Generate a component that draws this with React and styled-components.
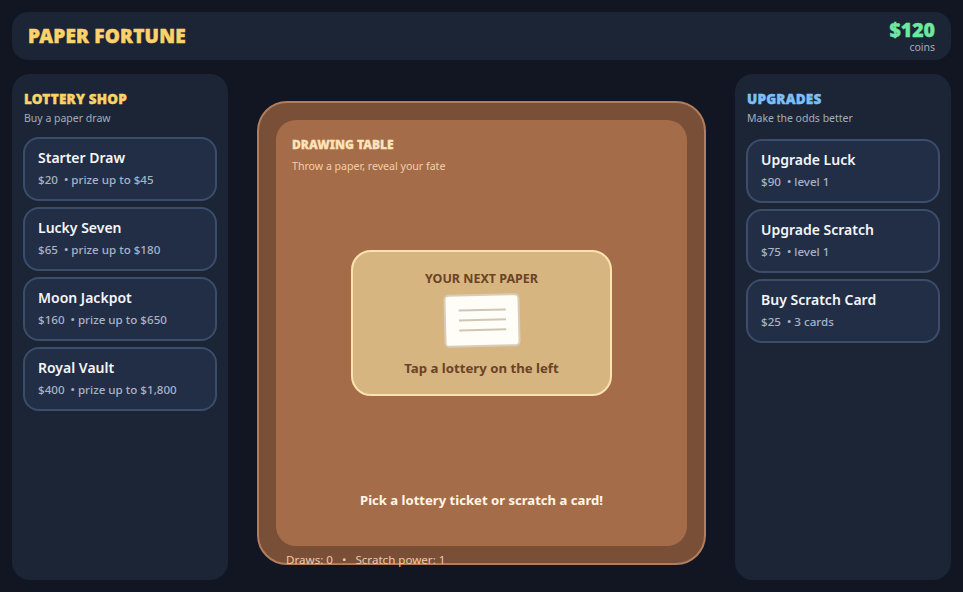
import React from "react";
import styled, { createGlobalStyle } from "styled-components";

const GlobalStyle = createGlobalStyle`
  html, body { margin: 0; padding: 0; height: 100%; }
  body {
    background: #111622;
    font-family: "Noto Sans", "Open Sans", sans-serif;
    overflow: hidden;
  }
`;

const Page = styled.div`
  width: 963px;
  height: 592px;
  box-sizing: border-box;
  padding: 12px;
  display: flex;
  flex-direction: column;
  gap: 14px;
`;

const TopBar = styled.header`
  height: 48px;
  box-sizing: border-box;
  padding: 0 16px;
  border-radius: 16px;
  background: #1c2536;
  display: flex;
  align-items: center;
  justify-content: space-between;
`;

const Logo = styled.h1`
  margin: 0;
  font-size: 19px;
  font-weight: 900;
  letter-spacing: 0.2px;
  -webkit-text-stroke: 0.5px currentColor;
  color: #fcd26a;
`;

const Coins = styled.div`
  text-align: right;
`;

const CoinValue = styled.div`
  font-size: 19.5px;
  line-height: 20px;
  font-weight: 900;
  -webkit-text-stroke: 0.4px currentColor;
  color: #6ee7a0;
`;

const CoinLabel = styled.div`
  font-size: 10.5px;
  line-height: 12px;
  color: #a3adbd;
  margin-top: 1px;
`;

const Columns = styled.div`
  flex: 1;
  display: grid;
  grid-template-columns: 216px 1fr 216px;
  min-height: 0;
`;

const Panel = styled.aside`
  box-sizing: border-box;
  padding: 17px 11px 12px;
  border-radius: 18px;
  background: #1c2536;
`;

const PanelTitle = styled.h2`
  margin: 0 0 0 1px;
  font-size: 13.5px;
  line-height: 16px;
  font-weight: 900;
  letter-spacing: 0.2px;
  -webkit-text-stroke: 0.4px currentColor;
  color: ${(p) => p.$color};
`;

const PanelSub = styled.p`
  margin: 4px 0 ${(p) => p.$gap}px 1px;
  font-size: 10.5px;
  line-height: 14px;
  color: #a3adbd;
`;

const ItemList = styled.div`
  display: flex;
  flex-direction: column;
  gap: 6px;
`;

const Item = styled.button`
  height: 64px;
  box-sizing: border-box;
  padding: 0 13px 3px;
  border: 2px solid #3b4d6b;
  border-radius: 16px;
  background: #222e46;
  font-family: inherit;
  text-align: left;
  display: flex;
  flex-direction: column;
  justify-content: center;
`;

const ItemName = styled.span`
  font-size: 14px;
  line-height: 20px;
  font-weight: 600;
  color: #f4f6fa;
`;

const ItemMeta = styled.span`
  margin-top: 4px;
  font-size: 11.6px;
  line-height: 16px;
  font-weight: 500;
  color: #a8b3c6;
  white-space: pre;
`;

const Center = styled.main`
  display: flex;
  justify-content: center;
  padding-top: 27px;
`;

const Board = styled.section`
  width: 449px;
  height: 464px;
  box-sizing: border-box;
  padding: 17px;
  border: 2px solid #b07e5d;
  border-radius: 30px;
  background: #7a4f38;
`;

const Stage = styled.div`
  height: 426px;
  box-sizing: border-box;
  padding: 17px 16px 0;
  border-radius: 20px;
  background: #a56c4a;
  display: flex;
  flex-direction: column;
  align-items: stretch;
`;

const StageTitle = styled.h3`
  margin: 0;
  font-size: 12px;
  line-height: 16px;
  font-weight: 900;
  -webkit-text-stroke: 0.3px currentColor;
  color: #fde3b8;
`;

const StageSub = styled.p`
  margin: 6px 0 0;
  font-size: 10.6px;
  line-height: 14px;
  color: #f4cfa6;
`;

const NextCard = styled.div`
  width: 261px;
  height: 146px;
  box-sizing: border-box;
  margin: 77px auto 0;
  padding-top: 19px;
  border: 2px solid #fbe3b0;
  border-radius: 20px;
  background: #d7b580;
  display: flex;
  flex-direction: column;
  align-items: center;
`;

const NextTitle = styled.div`
  font-size: 12.5px;
  line-height: 16px;
  font-weight: 700;
  color: #6b4326;
`;

const Paper = styled.div`
  width: 76px;
  height: 53px;
  box-sizing: border-box;
  margin-top: 7px;
  padding-top: 13px;
  border: 2px solid #d9cdb8;
  border-radius: 5px;
  background: #fffdf7;
  transform: rotate(-1.5deg);
  display: flex;
  flex-direction: column;
  align-items: center;
  gap: 8px;
`;

const PaperLine = styled.div`
  width: 47px;
  height: 2px;
  background: #cfc6b4;
`;

const NextHint = styled.div`
  margin-top: 12px;
  font-size: 13.2px;
  line-height: 18px;
  font-weight: 700;
  color: #6b4326;
`;

const Message = styled.div`
  margin-top: 95px;
  text-align: center;
  font-size: 13.1px;
  line-height: 18px;
  font-weight: 700;
  color: #fff6e6;
`;

const Stats = styled.div`
  margin: 6px 0 0 10px;
  font-size: 11.6px;
  line-height: 15px;
  color: #eec9a6;
  white-space: pre;
`;

const lotteries = [
  { name: "Starter Draw", meta: "$20  • prize up to $45" },
  { name: "Lucky Seven", meta: "$65  • prize up to $180" },
  { name: "Moon Jackpot", meta: "$160  • prize up to $650" },
  { name: "Royal Vault", meta: "$400  • prize up to $1,800" },
];

const upgrades = [
  { name: "Upgrade Luck", meta: "$90  • level 1" },
  { name: "Upgrade Scratch", meta: "$75  • level 1" },
  { name: "Buy Scratch Card", meta: "$25  • 3 cards" },
];

function ShopPanel({ title, color, sub, gap, items }) {
  return (
    <Panel>
      <PanelTitle $color={color}>{title}</PanelTitle>
      <PanelSub $gap={gap}>{sub}</PanelSub>
      <ItemList>
        {items.map((item) => (
          <Item key={item.name}>
            <ItemName>{item.name}</ItemName>
            <ItemMeta>{item.meta}</ItemMeta>
          </Item>
        ))}
      </ItemList>
    </Panel>
  );
}

export default function App() {
  return (
    <>
      <GlobalStyle />
      <Page>
        <TopBar>
          <Logo>PAPER FORTUNE</Logo>
          <Coins>
            <CoinValue>$120</CoinValue>
            <CoinLabel>coins</CoinLabel>
          </Coins>
        </TopBar>
        <Columns>
          <ShopPanel title="LOTTERY SHOP" color="#fcd26a" sub="Buy a paper draw" gap={12} items={lotteries} />
          <Center>
            <Board>
              <Stage>
                <StageTitle>DRAWING TABLE</StageTitle>
                <StageSub>Throw a paper, reveal your fate</StageSub>
                <NextCard>
                  <NextTitle>YOUR NEXT PAPER</NextTitle>
                  <Paper>
                    <PaperLine />
                    <PaperLine />
                    <PaperLine />
                  </Paper>
                  <NextHint>Tap a lottery on the left</NextHint>
                </NextCard>
                <Message>Pick a lottery ticket or scratch a card!</Message>
              </Stage>
              <Stats>{"Draws: 0   •   Scratch power: 1"}</Stats>
            </Board>
          </Center>
          <ShopPanel title="UPGRADES" color="#7cc0fa" sub="Make the odds better" gap={14} items={upgrades} />
        </Columns>
      </Page>
    </>
  );
}
